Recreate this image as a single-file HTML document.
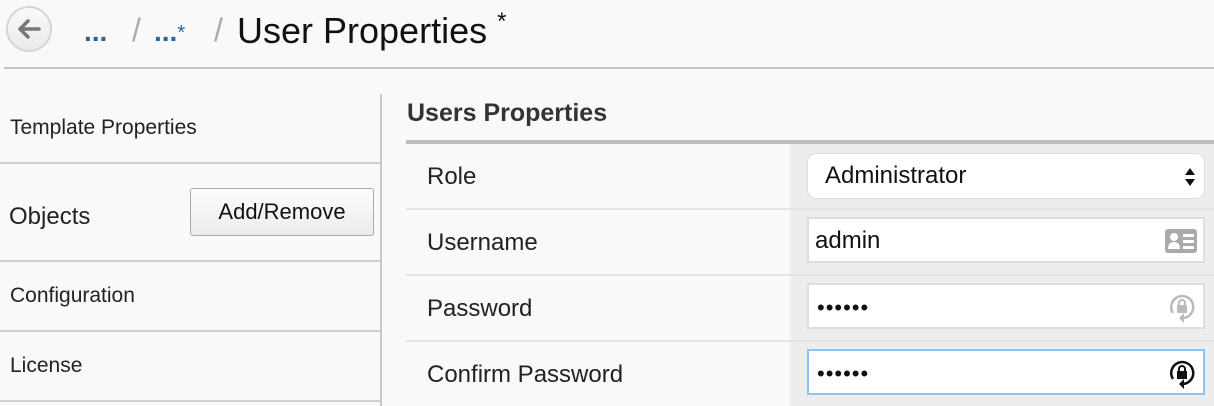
<!DOCTYPE html>
<html><head><style>
*{margin:0;padding:0;box-sizing:border-box}
body{width:1214px;height:406px;background:#f9f9f9;font-family:"Liberation Sans",sans-serif;position:relative;overflow:hidden;color:#222}
.a{position:absolute}
.t{font-size:20px;white-space:nowrap}
.hl{position:absolute;height:2px;background:#cfcfcf}
.inp{position:absolute;left:807px;width:398px;height:46px;background:#fff;border:2px solid #ddd}
.dots{position:absolute;left:8px;top:10px;font-size:22px;letter-spacing:1px;color:#111}
</style></head><body>
<div class="a" style="left:6px;top:6px;width:46px;height:46px;border-radius:50%;border:2px solid #d6d6d6;background:linear-gradient(#fafafa,#eaeaea)">
<svg width="42" height="42" viewBox="0 0 42 42" style="position:absolute;left:0;top:0"><path d="M31 21H13M20 13l-8 8 8 8" stroke="#777" stroke-width="3.5" fill="none" stroke-linecap="round" stroke-linejoin="round"/></svg></div>
<div class="a t" style="left:84px;top:16px;font-size:28px;font-weight:bold;color:#2a6496;letter-spacing:0px">...</div>
<div class="a t" style="left:132px;top:12px;font-size:32px;color:#aaa">/</div>
<div class="a t" style="left:154px;top:16px;font-size:28px;font-weight:bold;color:#2a6496">...<span style="font-size:20px;font-weight:normal;vertical-align:2px">*</span></div>
<div class="a t" style="left:214px;top:12px;font-size:32px;color:#aaa">/</div>
<div class="a t" style="left:237px;top:8px;font-size:36px;color:#111">User Properties <span style="font-size:24px;vertical-align:14px">*</span></div>
<div class="hl" style="left:4px;top:67px;width:1210px;background:#c4c4c4"></div>

<div class="a" style="left:380px;top:94px;width:2px;height:312px;background:#c8c8c8"></div>
<div class="a t" style="left:10px;top:116px;font-size:21px">Template Properties</div>
<div class="hl" style="left:0;top:162px;width:380px"></div>
<div class="a t" style="left:9px;top:203px;font-size:24px">Objects</div>
<div class="a" style="left:190px;top:188px;width:184px;height:48px;border:1px solid #aaa;border-radius:3px;background:linear-gradient(#fdfdfd,#ececec);font-size:22px;text-align:center;line-height:46px;color:#111">Add/Remove</div>
<div class="hl" style="left:0;top:260px;width:380px"></div>
<div class="a t" style="left:10px;top:284px;font-size:21px">Configuration</div>
<div class="hl" style="left:0;top:330px;width:380px"></div>
<div class="a t" style="left:10px;top:354px;font-size:21px">License</div>
<div class="hl" style="left:0;top:400px;width:380px"></div>

<div class="a t" style="left:407px;top:99px;font-size:25px;font-weight:bold;color:#333">Users Properties</div>
<div class="a" style="left:406px;top:140px;width:808px;height:4px;background:#bdbdbd"></div>
<div class="a" style="left:790px;top:144px;width:424px;height:262px;background:#ededed"></div>
<div class="hl" style="left:406px;top:208px;width:808px;height:2px;background:#e4e4e4"></div>
<div class="hl" style="left:406px;top:274px;width:808px;height:2px;background:#e4e4e4"></div>
<div class="hl" style="left:406px;top:340px;width:808px;height:2px;background:#e4e4e4"></div>
<div class="a t" style="left:427px;top:163px;font-size:24px">Role</div>
<div class="a t" style="left:427px;top:229px;font-size:24px">Username</div>
<div class="a t" style="left:427px;top:295px;font-size:24px">Password</div>
<div class="a t" style="left:427px;top:361px;font-size:24px">Confirm Password</div>

<div class="a" style="left:807px;top:153px;width:398px;height:46px;background:#fff;border:1px solid #ddd;border-radius:9px">
<div class="a t" style="left:17px;top:8px;font-size:24px;color:#111">Administrator</div>
<svg class="a" style="left:376px;top:13px" width="12" height="20"><path d="M1 8L6 1 11 8Z M1 12L6 19 11 12Z" fill="#111"/></svg></div>

<div class="inp" style="top:217px"><div class="a t" style="left:6px;top:8px;font-size:24px;color:#111">admin</div>
<svg class="a" style="left:356px;top:10px" width="32" height="24"><rect x="0" y="0" width="32" height="24" rx="3" fill="#aaa"/><circle cx="9" cy="8" r="4" fill="#fff"/><path d="M3 20q0-7 6-7t6 7Z" fill="#fff"/><rect x="18" y="5" width="11" height="3" fill="#fff"/><rect x="18" y="11" width="11" height="3" fill="#fff"/><rect x="18" y="17" width="11" height="3" fill="#fff"/></svg></div>

<div class="inp" style="top:283px"><div class="dots">••••••</div>
<svg class="a" style="left:359px;top:8px" width="28" height="30" viewBox="0 0 28 30"><path d="M5 20A11 11 0 1 1 15 25" stroke="#bbb" stroke-width="2.5" fill="none"/><path d="M16 20l-5 5 5 5z" fill="#bbb"/><rect x="9" y="12" width="10" height="8" fill="#bbb"/><path d="M11 12v-2a3 3 0 0 1 6 0v2" stroke="#bbb" stroke-width="2" fill="none"/></svg></div>

<div class="inp" style="top:349px;border-color:#8ec2ef"><div class="dots">••••••</div>
<svg class="a" style="left:359px;top:8px" width="28" height="30" viewBox="0 0 28 30"><path d="M5 20A11 11 0 1 1 15 25" stroke="#111" stroke-width="2.5" fill="none"/><path d="M16 20l-5 5 5 5z" fill="#111"/><rect x="9" y="12" width="10" height="8" fill="#111"/><path d="M11 12v-2a3 3 0 0 1 6 0v2" stroke="#111" stroke-width="2" fill="none"/></svg></div>
</body></html>
